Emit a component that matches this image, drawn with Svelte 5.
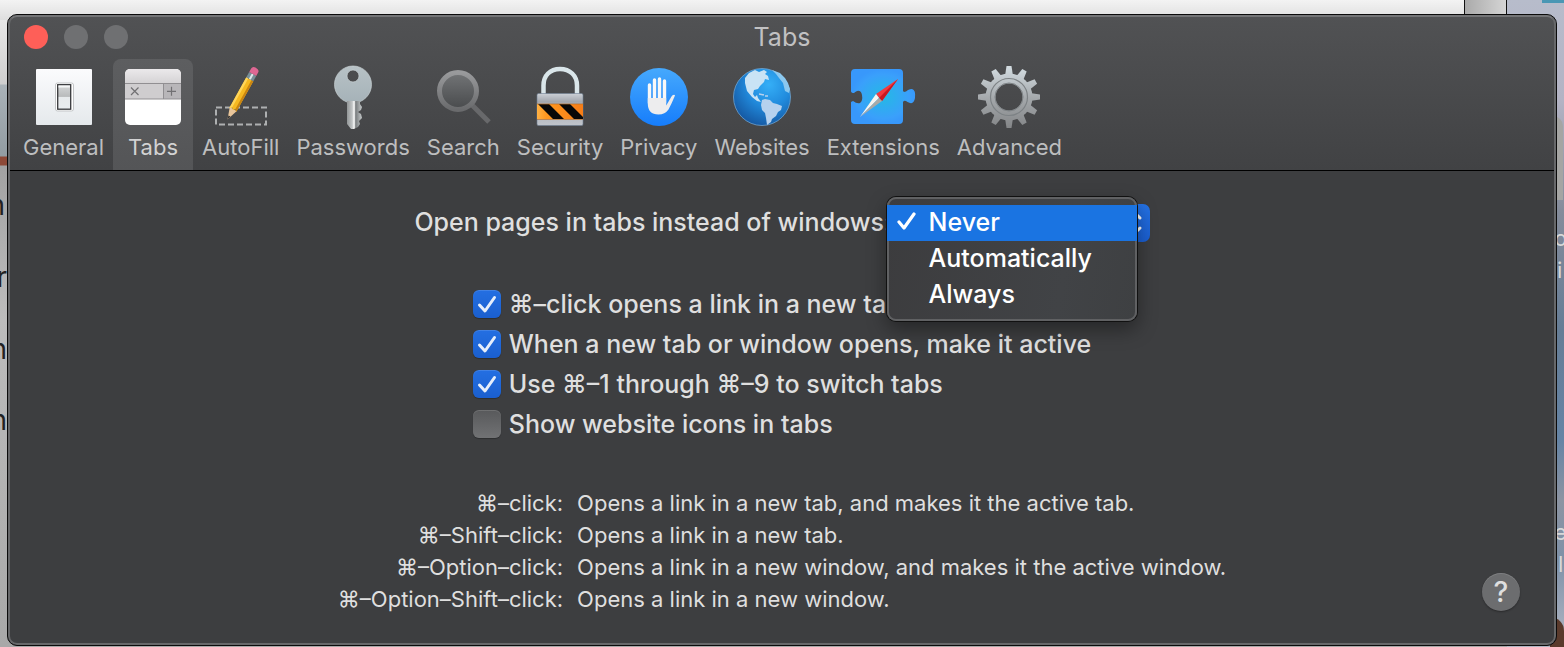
<script>
  const tools = [
    { id: 'general', label: 'General' },
    { id: 'tabs', label: 'Tabs' },
    { id: 'autofill', label: 'AutoFill' },
    { id: 'passwords', label: 'Passwords' },
    { id: 'search', label: 'Search' },
    { id: 'security', label: 'Security' },
    { id: 'privacy', label: 'Privacy' },
    { id: 'websites', label: 'Websites' },
    { id: 'extensions', label: 'Extensions' },
    { id: 'advanced', label: 'Advanced' }
  ];
  let activeTool = $state('tabs');

  const modes = ['Never', 'Automatically', 'Always'];
  let mode = $state('Never');
  let menuOpen = $state(true);

  let options = $state([
    { text: '⌘–click opens a link in a new tab', on: true },
    { text: 'When a new tab or window opens, make it active', on: true },
    { text: 'Use ⌘–1 through ⌘–9 to switch tabs', on: true },
    { text: 'Show website icons in tabs', on: false }
  ]);

  const shortcuts = [
    ['⌘–click:', 'Opens a link in a new tab, and makes it the active tab.'],
    ['⌘–Shift–click:', 'Opens a link in a new tab.'],
    ['⌘–Option–click:', 'Opens a link in a new window, and makes it the active window.'],
    ['⌘–Option–Shift–click:', 'Opens a link in a new window.']
  ];

  const teeth = Array.from({ length: 12 }, (_, i) => i * 30);

  function choose(value) {
    mode = value;
    menuOpen = false;
  }
</script>

<div class="desktop">
  <div class="edge left" aria-hidden="true">
    <span class="l1">n</span><span class="l2">r</span><span class="l3">n</span><span class="l4">h</span>
  </div>
  <div class="edge top" aria-hidden="true"></div>
  <div class="edge right" aria-hidden="true">
    <i class="card"></i><i class="frame"></i><i class="hill"></i>
    <span class="r1">o</span><span class="r2">i</span><span class="r3">e</span><span class="r4">l</span>
  </div>

  <main class="window">
    <header class="chrome">
      <div class="titlebar">
        <div class="lights">
          <button class="light close" aria-label="Close"></button>
          <button class="light" aria-label="Minimize" disabled></button>
          <button class="light" aria-label="Zoom" disabled></button>
        </div>
        <h1>Tabs</h1>
      </div>
      <nav class="toolbar" aria-label="Preference panes">
        {#each tools as tool (tool.id)}
          <button class="tool" class:active={activeTool === tool.id} onclick={() => (activeTool = tool.id)}>
            <svg viewBox="0 0 64 64" aria-hidden="true">
              {#if tool.id === 'general'}
                <defs>
                  <linearGradient id="plate" x2="0" y2="1"><stop stop-color="#fbfbfd" /><stop offset="1" stop-color="#e5e9ec" /></linearGradient>
                  <linearGradient id="rocker" x2="0" y2="1"><stop stop-color="#d6d7d8" /><stop offset=".48" stop-color="#b9bbbc" /><stop offset=".5" stop-color="#e7eaec" /><stop offset="1" stop-color="#e9edf0" /></linearGradient>
                </defs>
                <rect x="4" y="4" width="56" height="56" rx="1" fill="url(#plate)" />
                <rect x="23.500" y="18" width="18" height="28" rx="2" fill="#fff" stroke="#c3c5c7" />
                <rect x="25.700" y="19.700" width="13" height="24.500" fill="url(#rocker)" stroke="#37383b" stroke-width="1.300" />
                <path d="M26.500 21.500h11.400" stroke="#f6f7f8" stroke-width="2" />
              {:else if tool.id === 'tabs'}
                <defs>
                  <linearGradient id="bar" x2="0" y2="1"><stop stop-color="#ebe9eb" /><stop offset="1" stop-color="#d5d3d5" /></linearGradient>
                  <clipPath id="tabclip"><rect x="4" y="4" width="56" height="56" rx="5" /></clipPath>
                </defs>
                <g clip-path="url(#tabclip)">
                  <path d="M4 4h56v56H4z" fill="#fff" />
                  <path d="M4 4h56v14H4z" fill="url(#bar)" />
                  <path d="M4 18h38v16H4z" fill="#cfcdcf" />
                  <path d="M42 18h18v16H42z" fill="#b8b6b9" />
                  <path d="M4 18.500h56M4 34h56M42.500 18v16" stroke="#918f92" fill="none" />
                </g>
                <path d="M10 22.500l7.500 7.500M17.500 22.500L10 30M46 26.300h9M50.500 21.800v9" stroke="#717073" stroke-width="1.200" />
              {:else if tool.id === 'autofill'}
                <path d="M7 42.500h50v17H7z" fill="none" stroke="#aeb0b1" stroke-width="2" stroke-dasharray="6 3" />
                <g transform="translate(18.500 54.500) rotate(29)">
                  <path d="M0 0L-4-12h8z" fill="#e9c69b" />
                  <path d="M0 0l-1.200-4h2.400z" fill="#333" />
                  <path d="M-4-11v-35h8v35l-2-2-2 2-2-2z" fill="#f6b921" />
                  <path d="M-4-11v-35h2.200v33.500z" fill="#ffd65b" />
                  <path d="M4-11v-35H1.800v33.500z" fill="#c98511" />
                  <path d="M-4-46h8v-6h-8z" fill="#789098" />
                  <path d="M-1-46h2v-6h-2z" fill="#dce6e8" />
                  <path d="M-4-52h8v-4q0-3-4-3t-4 3z" fill="#de6793" />
                </g>
              {:else if tool.id === 'passwords'}
                <defs>
                  <linearGradient id="keyhead" x2="0" y2="1"><stop stop-color="#b8c2c6" /><stop offset="1" stop-color="#a5b2b8" /></linearGradient>
                  <linearGradient id="keyblade"><stop stop-color="#929697" /><stop offset=".35" stop-color="#c2c5c6" /><stop offset=".48" stop-color="#fff" /><stop offset=".58" stop-color="#777b7d" /><stop offset="1" stop-color="#c6cacb" /></linearGradient>
                </defs>
                <path fill-rule="evenodd" d="M32 1a18 18 0 1 0 0 37a18 18 0 1 0 0-37M32 5a6 6 0 1 1 0 12a6 6 0 1 1 0-12" fill="url(#keyhead)" stroke="#c8d1d4" stroke-width=".7" />
                <path d="M26 36h13v3l2 3-1 3-3 2 3 2 1 4-3 3 1 3-2 3-4 2h-3l-4-5z" fill="url(#keyblade)" />
              {:else if tool.id === 'search'}
                <defs>
                  <linearGradient id="lensring" x2="0" y2="1"><stop stop-color="#999a9c" /><stop offset="1" stop-color="#6a6b6d" /></linearGradient>
                  <linearGradient id="lens" x2="0" y2="1"><stop stop-color="#737577" /><stop offset="1" stop-color="#484a4c" /></linearGradient>
                </defs>
                <path d="M41 40L58 57" stroke="#68696b" stroke-width="5" />
                <circle cx="27" cy="26" r="18.500" fill="url(#lens)" stroke="url(#lensring)" stroke-width="5" />
              {:else if tool.id === 'security'}
                <defs>
                  <linearGradient id="steel" x2="0" y2="1"><stop stop-color="#ccd0d6" /><stop offset=".25" stop-color="#a4a8af" /><stop offset="1" stop-color="#c0c4cb" /></linearGradient>
                  <linearGradient id="orange"><stop stop-color="#ffb144" /><stop offset=".2" stop-color="#ff9820" /><stop offset="1" stop-color="#f67d17" /></linearGradient>
                  <clipPath id="band"><path d="M9 39h46v15H9z" /></clipPath>
                </defs>
                <path d="M15.500 30V20.500C15.500 10.500 22 4 32 4s17 6.500 17 16.500V30" fill="none" stroke="#dae6ea" stroke-width="4.500" />
                <rect x="9" y="28.500" width="46" height="32" rx="1.500" fill="url(#steel)" stroke="#6d7d92" stroke-width=".6" />
                <path d="M9 39h46v15H9z" fill="url(#orange)" />
                <g clip-path="url(#band)" fill="#080808"><path d="M9 38h11l17 17H26zM30 38h11l17 17H47z" /></g>
                <path d="M9 39h46M9 54.500h46" stroke="#b9702a" stroke-width=".7" />
              {:else if tool.id === 'privacy'}
                <defs><linearGradient id="blue" x2="0" y2="1"><stop stop-color="#46a9fd" /><stop offset="1" stop-color="#167dfb" /></linearGradient></defs>
                <circle cx="32" cy="32" r="29" fill="url(#blue)" />
                <g fill="none" stroke="#f8f8f8" stroke-width="3.400" stroke-linecap="round">
                  <path d="M22.500 20v18M27.500 15v22M32.500 14v22M37.500 16v22" />
                </g>
                <path d="M20.800 33h18.400v7.500l5.300-9q1-2 3.200-1.600l.3.600Q44.500 39 41.500 44.500 38 49.500 31.500 49.500q-10.700 0-10.700-11z" fill="#ededee" />
              {:else if tool.id === 'websites'}
                <defs><radialGradient id="globe" cx=".62" cy=".28" r=".75"><stop stop-color="#35aff7" /><stop offset=".5" stop-color="#218bdd" /><stop offset="1" stop-color="#1558a2" /></radialGradient></defs>
                <circle cx="32" cy="32" r="28.500" fill="url(#globe)" stroke="#78aeda" stroke-width=".7" />
                <path d="M15 13l4-5 6-3 4 2 5-2 3 2-2 2 3 2 1 4-4-1-1 3-4 4-2 3-4 1-1 4 2 3 2-2 1 3 3 4-4-1-5-4-5-6-2-8z" fill="#c9e3f5" />
                <path d="M32 35l3-1 5 1 3 3 4 1 5 2-1 4-3 2-2 4-4 3-1 3-4 3-1-7-1-5-3-3-1-5z" fill="#b5d1ee" />
                <path d="M42 5l8 3 5 5 3 5 2 6-1 4-4-2-2-8-4-5-3-4z" fill="#8bc8ef" />
                <path d="M29 29l5 1M35 31h3" stroke="#b5d1ee" stroke-width="1.500" fill="none" />
              {:else if tool.id === 'extensions'}
                <defs><radialGradient id="puzzle"><stop stop-color="#24b9e4" /><stop offset=".8" stop-color="#3aa0fb" /><stop offset="1" stop-color="#3898fb" /></radialGradient></defs>
                <path d="M4 4h44q4 0 4 4v18l1 1q2 0 4-2 2-1 4-1 4 1 3 9-1 6-5 5-3-1-4-2-2-1-3 1v18q0 4-4 4H4q-4 0-4-4V37l2-1q4 3 7 2 3-2 2-8-1-5-5-4-2 1-3 2-3 0-3-2V8q0-4 4-4z" fill="url(#puzzle)" />
                <path d="M47 14L25 29l6 7z" fill="#f3393f" /><path d="M47 14L28 33l3 3z" fill="#c91820" />
                <path d="M25 29L9 52l19-19z" fill="#f7f5f1" /><path d="M28 33L9 52l22-16z" fill="#aaa9a6" />
              {:else}
                <defs><linearGradient id="gear" x1="0" y1="2" x2="0" y2="62" gradientUnits="userSpaceOnUse"><stop stop-color="#d2dbe0" /><stop offset=".55" stop-color="#a2a6a9" /><stop offset="1" stop-color="#858789" /></linearGradient>
                  <mask id="cog"><circle cx="32" cy="32" r="23.500" fill="#fff" />
                    {#each teeth as angle}<path d="M28 11l1.500-10h5L36 11z" fill="#fff" transform={`rotate(${angle} 32 32)`} />{/each}
                    <circle cx="32" cy="32" r="13.500" fill="#000" />
                  </mask>
                </defs>
                <path d="M0 0h64v64H0z" fill="url(#gear)" mask="url(#cog)" />
                <circle cx="32" cy="32" r="18.500" fill="none" stroke="#7d8285" stroke-width="1.200" />
                <circle cx="32" cy="32" r="14" fill="none" stroke="#7d8285" />
              {/if}
            </svg>
            <span>{tool.label}</span>
          </button>
        {/each}
      </nav>
    </header>

    <section class="pane">
      <div class="open-row">
        <label for="open-mode">Open pages in tabs instead of windows:</label>
        <div class="picker">
          <select id="open-mode" bind:value={mode}>
            {#each modes as m}<option>{m}</option>{/each}
          </select>
          {#if menuOpen}
            <div class="menu" role="menu">
              {#each modes as m}
                <button role="menuitemradio" aria-checked={mode === m} class:chosen={mode === m} onclick={() => choose(m)}>
                  <svg viewBox="0 0 20 20" aria-hidden="true">
                    {#if mode === m}<path d="M2 10l5 6L17 2" fill="none" stroke="#fff" stroke-width="3.200" stroke-linecap="round" stroke-linejoin="round" />{/if}
                  </svg>
                  {m}
                </button>
              {/each}
            </div>
          {/if}
        </div>
      </div>

      <div class="checks">
        {#each options as option}
          <label><input type="checkbox" bind:checked={option.on} />{option.text}</label>
        {/each}
      </div>

      <div class="bottom">
        <dl>
          {#each shortcuts as [keys, effect]}
            <dt>{keys}</dt>
            <dd>{effect}</dd>
          {/each}
        </dl>
        <button class="help" aria-label="Help">?</button>
      </div>
    </section>
  </main>
</div>

<style>
  :global(body) {
    margin: 0;
    background: #a9a9a9;
  }
  .desktop {
    position: relative;
    box-sizing: border-box;
    min-height: 100vh;
    padding: 14px 7px 1px;
    overflow: hidden;
    font-family: Inter, "DejaVu Sans", sans-serif;
    background: linear-gradient(#d8d8d8, #b2b2b2 50%, #a8a8a8);
  }
  button, select { font: inherit; color: inherit; }
  button { border: 0; padding: 0; background: none; }

  /* Things lying behind the window, seen only round its edges */
  .edge { position: absolute; overflow: hidden; }
  .edge span { position: absolute; font-size: 28px; line-height: 32px; }
  .left {
    inset: 0 auto 0 0;
    width: 7px;
    background: linear-gradient(#f0f0f0 0, #cecece 84px, #a9b2b8 85px, #929ca2 156px, #8d4937 157px, #8d4937 165px, #a2a2a2 166px, #bcbcbc 320px, #a8a8a8);
  }
  .left span { right: 2px; color: #222; }
  .left .l1 { top: 189px; }
  .left .l2 { top: 261px; right: 0; }
  .left .l3 { top: 333px; right: 0; }
  .left .l4 { top: 404px; right: 0; }
  .top {
    inset: 0 57px auto 0;
    height: 20px;
    background: linear-gradient(90deg, transparent calc(100% - 43px), #111 calc(100% - 43px), #111 calc(100% - 42px), #aaa calc(100% - 42px), #d5d5d5 calc(100% - 1px), #111 calc(100% - 1px)), linear-gradient(#f3f3f3, #dedede);
  }
  .right {
    inset: 0 0 0 auto;
    width: 57px;
    background: linear-gradient(#b7bccb, #b3b3c4 100px, #858c9b 210px, #667d96 330px, #6584a5 440px, #8c94a2 500px, #7e91a8 560px, #b2b7c4);
  }
  .right .card { position: absolute; top: 0; right: 0; width: 22px; height: 3px; background: #4a97b4; }
  .right .frame { position: absolute; top: 116px; right: 1px; width: 16px; height: 84px; border-radius: 0 10px 0 0; background: #a5a5a3; }
  .right .hill { position: absolute; bottom: 0; right: 0; width: 14px; height: 30px; border-radius: 0 14px 0 0; background: #5a3a2c; }
  .right span { left: 47px; font-size: 22px; color: #d8d8d8; }
  .right .r1 { top: 222px; }
  .right .r2 { top: 254px; left: 50px; }
  .right .r3 { top: 516px; }
  .right .r4 { top: 548px; left: 51px; }

  .window {
    position: relative;
    box-sizing: border-box;
    min-height: calc(100vh - 15px);
    border: 1px solid #0b0b0b;
    border-radius: 10px;
    overflow: hidden;
    color: #dfdfdf;
    background: #3d3e40;
  }
  .window::after {
    content: "";
    position: absolute;
    inset: 0;
    border: 2px solid #67686a;
    border-top-color: #737476;
    border-radius: 9px;
    pointer-events: none;
  }
  .chrome {
    border-bottom: 1px solid #000;
    background: linear-gradient(#515254, #414244);
  }
  .titlebar {
    display: grid;
    grid-template-columns: 1fr auto 1fr;
    align-items: center;
    height: 44px;
    padding: 0 16px;
  }
  .lights { display: flex; gap: 16px; }
  .light { width: 24px; height: 24px; border-radius: 50%; background: #6f7072; }
  .light.close { background: #fe5f58; }
  h1 { margin: 0; font-size: 25px; line-height: 32px; font-weight: 400; color: #c1c1c2; }
  .toolbar { display: flex; gap: 1px; padding: 0 7px; }
  .tool {
    display: flex;
    flex-direction: column;
    align-items: center;
    box-sizing: border-box;
    min-width: 80px;
    height: 111px;
    padding: 6px 8px 0;
    gap: 4px;
    border-radius: 8px 8px 0 0;
    font-size: 22px;
    line-height: 28px;
    color: #bdbebf;
  }
  .tool svg { width: 64px; height: 64px; overflow: visible; }
  .tool.active { background: linear-gradient(#5d5e60, #545557); color: #d2d2d3; }

  .pane {
    display: flex;
    flex-direction: column;
    padding: 33px 36px 29px;
    font-size: 25px;
    font-weight: 500;
    line-height: 36px;
  }
  .open-row { display: flex; justify-content: center; gap: 2px; height: 38px; }
  .picker { position: relative; }
  select {
    appearance: none;
    width: 256px;
    height: 38px;
    padding: 0 36px 0 16px;
    border: 0;
    border-radius: 7px;
    background: url("data:image/svg+xml,%3Csvg xmlns='http://www.w3.org/2000/svg' viewBox='0 0 32 38'%3E%3Cpath d='M10 14l6-6 6 6M10 24l6 6 6-6' fill='none' stroke='white' stroke-width='3' stroke-linecap='round' stroke-linejoin='round'/%3E%3C/svg%3E") right 0 center / 32px 38px no-repeat, linear-gradient(#2472e4, #1a5fd2);
  }
  .menu {
    position: absolute;
    z-index: 1;
    top: -7px;
    left: -7px;
    box-sizing: border-box;
    width: 250px;
    padding: 8px 0;
    border-radius: 9px;
    color: #fff;
    font-weight: 500;
    background: linear-gradient(100deg, #3c3c3e, #414346 70%, #3e4042);
    box-shadow: inset 0 0 0 2px #606163, 0 0 0 1px #111, 0 8px 20px #0006;
  }
  .menu button {
    display: flex;
    align-items: center;
    gap: 12px;
    width: 100%;
    height: 36px;
    padding: 0 10px 2px;
    font-size: 25px;
    line-height: 34px;
  }
  .menu svg { width: 20px; height: 20px; }
  .menu .chosen { background: #1a74e2; }

  .checks { align-self: center; margin-top: 42px; }
  .checks label { display: flex; align-items: center; gap: 8px; height: 40px; }
  input {
    appearance: none;
    width: 28px;
    height: 28px;
    margin: 0;
    border-radius: 6px;
    background: linear-gradient(#58595b, #717274);
    box-shadow: 0 1px 1px #0004, inset 0 1px 0 #fff2;
  }
  input:checked {
    background: url("data:image/svg+xml,%3Csvg xmlns='http://www.w3.org/2000/svg' viewBox='0 0 28 28'%3E%3Cpath d='M6.500 15l5.500 6L21.500 7.500' fill='none' stroke='%23e6eefb' stroke-width='3' stroke-linecap='round' stroke-linejoin='round'/%3E%3C/svg%3E"), linear-gradient(#246fe2, #1a5fcf);
  }

  .bottom {
    display: grid;
    grid-template-columns: 1fr auto 1fr;
    align-items: end;
    margin-top: 43px;
  }
  dl {
    grid-column: 2;
    display: grid;
    grid-template-columns: auto auto;
    column-gap: 14px;
    margin: 0;
    font-size: 22px;
    font-weight: 400;
    line-height: 32px;
  }
  dt { text-align: right; }
  dd { margin: 0; }
  .help {
    justify-self: end;
    width: 38px;
    height: 38px;
    margin-bottom: 4px;
    border-radius: 50%;
    font-size: 28px;
    line-height: 38px;
    font-weight: 500;
    background: #6c6d6f;
    box-shadow: 0 1px 2px #0005, inset 0 1px 0 #fff2;
  }
</style>
